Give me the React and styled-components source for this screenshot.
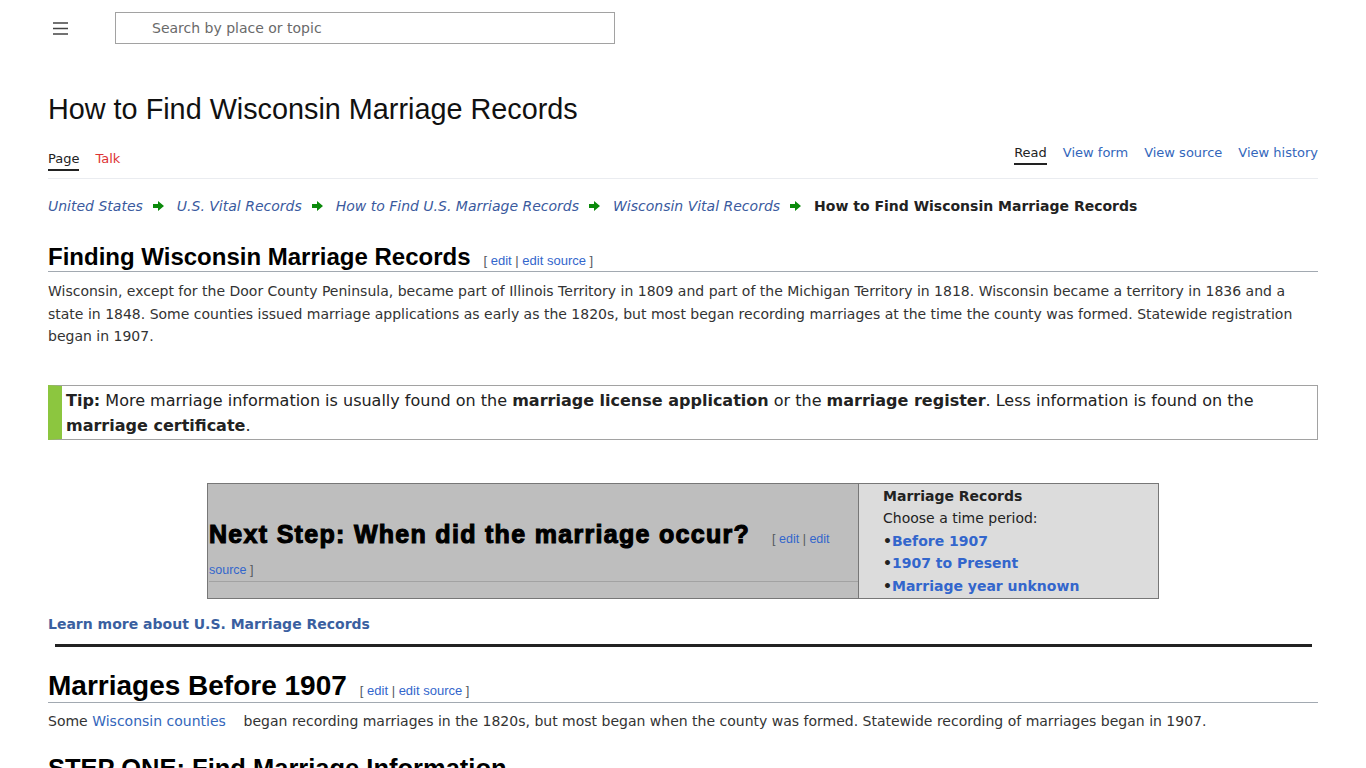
import React from "react";
import styled, { createGlobalStyle } from "styled-components";

const Global = createGlobalStyle`
  html, body { margin: 0; padding: 0; background: #fff; }
  body { font-family: "DejaVu Sans", Verdana, sans-serif; color: #222; }
  a { text-decoration: none; }
`;

const Page = styled.div`
  padding: 0 48px;
`;

const TopBar = styled.header`
  display: flex;
  align-items: center;
  height: 56px;
`;

const MenuButton = styled.button`
  width: 24px;
  height: 24px;
  margin-left: 0;
  margin-right: 43px;
  padding: 0;
  border: 0;
  background: none;
  display: flex;
  align-items: center;
  justify-content: center;
`;

const SearchBox = styled.input`
  box-sizing: border-box;
  width: 500px;
  height: 32px;
  border: 1px solid #a2a2a2;
  padding: 0 0 0 36px;
  font-family: "DejaVu Sans", Verdana, sans-serif;
  font-size: 14px;
  color: #222;
  outline: none;
  &::placeholder { color: #6a6a6a; }
`;

const Title = styled.h1`
  margin: 36px 0 0;
  font-family: "Liberation Sans", Arial, sans-serif;
  font-weight: normal;
  font-size: 28.8px;
  line-height: 34px;
  color: #111;
`;

const TabBar = styled.nav`
  display: flex;
  justify-content: space-between;
  align-items: flex-start;
  margin-top: 18px;
  border-bottom: 1px solid #eaecf0;
  padding-bottom: 7px;
`;

const TabGroup = styled.div`
  display: flex;
  gap: 16px;
  margin-top: ${p => p.$offset || 0}px;
`;

const Tab = styled.a`
  font-size: 13px;
  line-height: 18px;
  color: ${p => (p.$red ? "#d33" : p.$active ? "#222" : "#3366bb")};
  padding-bottom: 1px;
  border-bottom: 2px solid ${p => (p.$active ? "#222" : "transparent")};
`;

const Crumbs = styled.div`
  display: flex;
  align-items: center;
  flex-wrap: wrap;
  margin-top: 16px;
  font-size: 14px;
  line-height: 22px;
`;

const CrumbLink = styled.a`
  font-style: italic;
  color: #3a5a9e;
`;

const CrumbCurrent = styled.span`
  font-weight: bold;
  color: #222;
`;

const Arrow = styled.span`
  display: inline-flex;
  margin: 0 13px 0 10px;
`;

const H2 = styled.h2`
  margin: ${p => p.$mt}px 0 0;
  padding-bottom: 1px;
  border-bottom: 1px solid #a2a9b1;
  font-family: "Liberation Sans", Arial, sans-serif;
  font-size: ${p => p.$size}px;
  font-weight: bold;
  line-height: ${p => p.$lh}px;
  color: #000;
`;

const EditLinks = styled.span`
  font-family: "Liberation Sans", Arial, sans-serif;
  font-weight: normal;
  font-size: 13px;
  line-height: 1;
  color: #54595d;
  margin-left: 13px;
  a { color: #3366cc; }
`;

const Para = styled.p`
  margin: ${p => p.$mt || 8}px 0 0;
  font-size: 14px;
  line-height: 22.5px;
  color: #333;
  a { color: #3366bb; }
`;

const Tip = styled.div`
  margin-top: 37px;
  border: 1px solid #a2a2a2;
  border-left: 14px solid #8cc63f;
  padding: 2px 8px 1px 4px;
  font-size: 16px;
  line-height: 25px;
  color: #222;
`;

const NavTable = styled.div`
  display: flex;
  width: 950px;
  margin: 43px auto 0;
  border: 1px solid #777;
`;

const StepCell = styled.div`
  flex: 1;
  background: #bebebe;
  border-right: 1px solid #777;
  display: flex;
  flex-direction: column;
  justify-content: flex-end;
  padding: 0 0 16px 1px;
`;

const StepHeading = styled.div`
  font-family: "Liberation Sans", Arial, sans-serif;
  font-size: 25px;
  font-weight: 900;
  -webkit-text-stroke: 1.1px #000;
  letter-spacing: 1.3px;
  line-height: 31px;
  color: #000;
  border-bottom: 1px solid #a2a2a2;
`;

const StepEdit = styled(EditLinks)`
  -webkit-text-stroke: 0;
  letter-spacing: 0;
  font-size: 12.5px;
  margin-left: 22px;
`;

const ChoiceCell = styled.div`
  width: 251px;
  background: #dcdcdc;
  padding: 1px 24px 1px;
  font-size: 14px;
  line-height: 22.5px;
  color: #222;
`;

const ChoiceTitle = styled.div`
  font-weight: bold;
`;

const ChoiceLink = styled.div`
  font-weight: bold;
  a { color: #3366cc; }
`;

const Bullet = styled.span`
  color: #222;
`;

const LearnMore = styled.a`
  display: block;
  margin-top: 14px;
  font-size: 14px;
  line-height: 22px;
  font-weight: bold;
  color: #3a5fa0;
`;

const Rule = styled.hr`
  margin: 9px 6px 0 7px;
  border: 0;
  border-top: 3px solid #222;
`;

const Arr = () => (
  <svg width="11" height="10" viewBox="0 0 11 10">
    <path d="M0 3h5V0l6 5-6 5V7H0z" fill="#0b8a0b" />
  </svg>
);

export default function App() {
  return (
    <>
      <Global />
      <Page>
        <TopBar>
          <MenuButton aria-label="menu">
            <svg width="15" height="13" viewBox="0 0 15 13">
              <path d="M0 1h15M0 6.5h15M0 12h15" stroke="#444" strokeWidth="1.6" />
            </svg>
          </MenuButton>
          <SearchBox placeholder="Search by place or topic" />
        </TopBar>

        <Title>How to Find Wisconsin Marriage Records</Title>

        <TabBar>
          <TabGroup $offset={6}>
            <Tab $active>Page</Tab>
            <Tab $red>Talk</Tab>
          </TabGroup>
          <TabGroup>
            <Tab $active>Read</Tab>
            <Tab>View form</Tab>
            <Tab>View source</Tab>
            <Tab>View history</Tab>
          </TabGroup>
        </TabBar>

        <Crumbs>
          <CrumbLink>United States</CrumbLink>
          <Arrow><Arr /></Arrow>
          <CrumbLink>U.S. Vital Records</CrumbLink>
          <Arrow><Arr /></Arrow>
          <CrumbLink>How to Find U.S. Marriage Records</CrumbLink>
          <Arrow><Arr /></Arrow>
          <CrumbLink>Wisconsin Vital Records</CrumbLink>
          <Arrow><Arr /></Arrow>
          <CrumbCurrent>How to Find Wisconsin Marriage Records</CrumbCurrent>
        </Crumbs>

        <H2 $mt={27} $size={24} $lh={26}>
          Finding Wisconsin Marriage Records
          <EditLinks>[ <a>edit</a> | <a>edit source</a> ]</EditLinks>
        </H2>
        <Para>
          Wisconsin, except for the Door County Peninsula, became part of Illinois Territory in 1809 and part of the
          Michigan Territory in 1818. Wisconsin became a territory in 1836 and a state in 1848. Some counties issued
          marriage applications as early as the 1820s, but most began recording marriages at the time the county was
          formed. Statewide registration began in 1907.
        </Para>

        <Tip>
          <b>Tip:</b> More marriage information is usually found on the <b>marriage license application</b> or the{" "}
          <b>marriage register</b>. Less information is found on the <b>marriage certificate</b>.
        </Tip>

        <NavTable>
          <StepCell>
            <StepHeading>
              Next Step: When did the marriage occur?
              <StepEdit>[ <a>edit</a> | <a>edit source</a> ]</StepEdit>
            </StepHeading>
          </StepCell>
          <ChoiceCell>
            <ChoiceTitle>Marriage Records</ChoiceTitle>
            <div>Choose a time period:</div>
            <ChoiceLink><Bullet>•</Bullet><a>Before 1907</a></ChoiceLink>
            <ChoiceLink><Bullet>•</Bullet><a>1907 to Present</a></ChoiceLink>
            <ChoiceLink><Bullet>•</Bullet><a>Marriage year unknown</a></ChoiceLink>
          </ChoiceCell>
        </NavTable>

        <LearnMore>Learn more about U.S. Marriage Records</LearnMore>
        <Rule />

        <H2 $mt={24} $size={28} $lh={30}>
          Marriages Before 1907
          <EditLinks>[ <a>edit</a> | <a>edit source</a> ]</EditLinks>
        </H2>
        <Para $mt={7}>
          Some <a>Wisconsin counties</a>&nbsp;&nbsp;&nbsp; began recording marriages in the 1820s, but most began when
          the county was formed. Statewide recording of marriages began in 1907.
        </Para>

        <H2 $mt={20} $size={25.5} $lh={30}>
          STEP ONE: Find Marriage Information
          <EditLinks>[ <a>edit</a> | <a>edit source</a> ]</EditLinks>
        </H2>
      </Page>
    </>
  );
}
